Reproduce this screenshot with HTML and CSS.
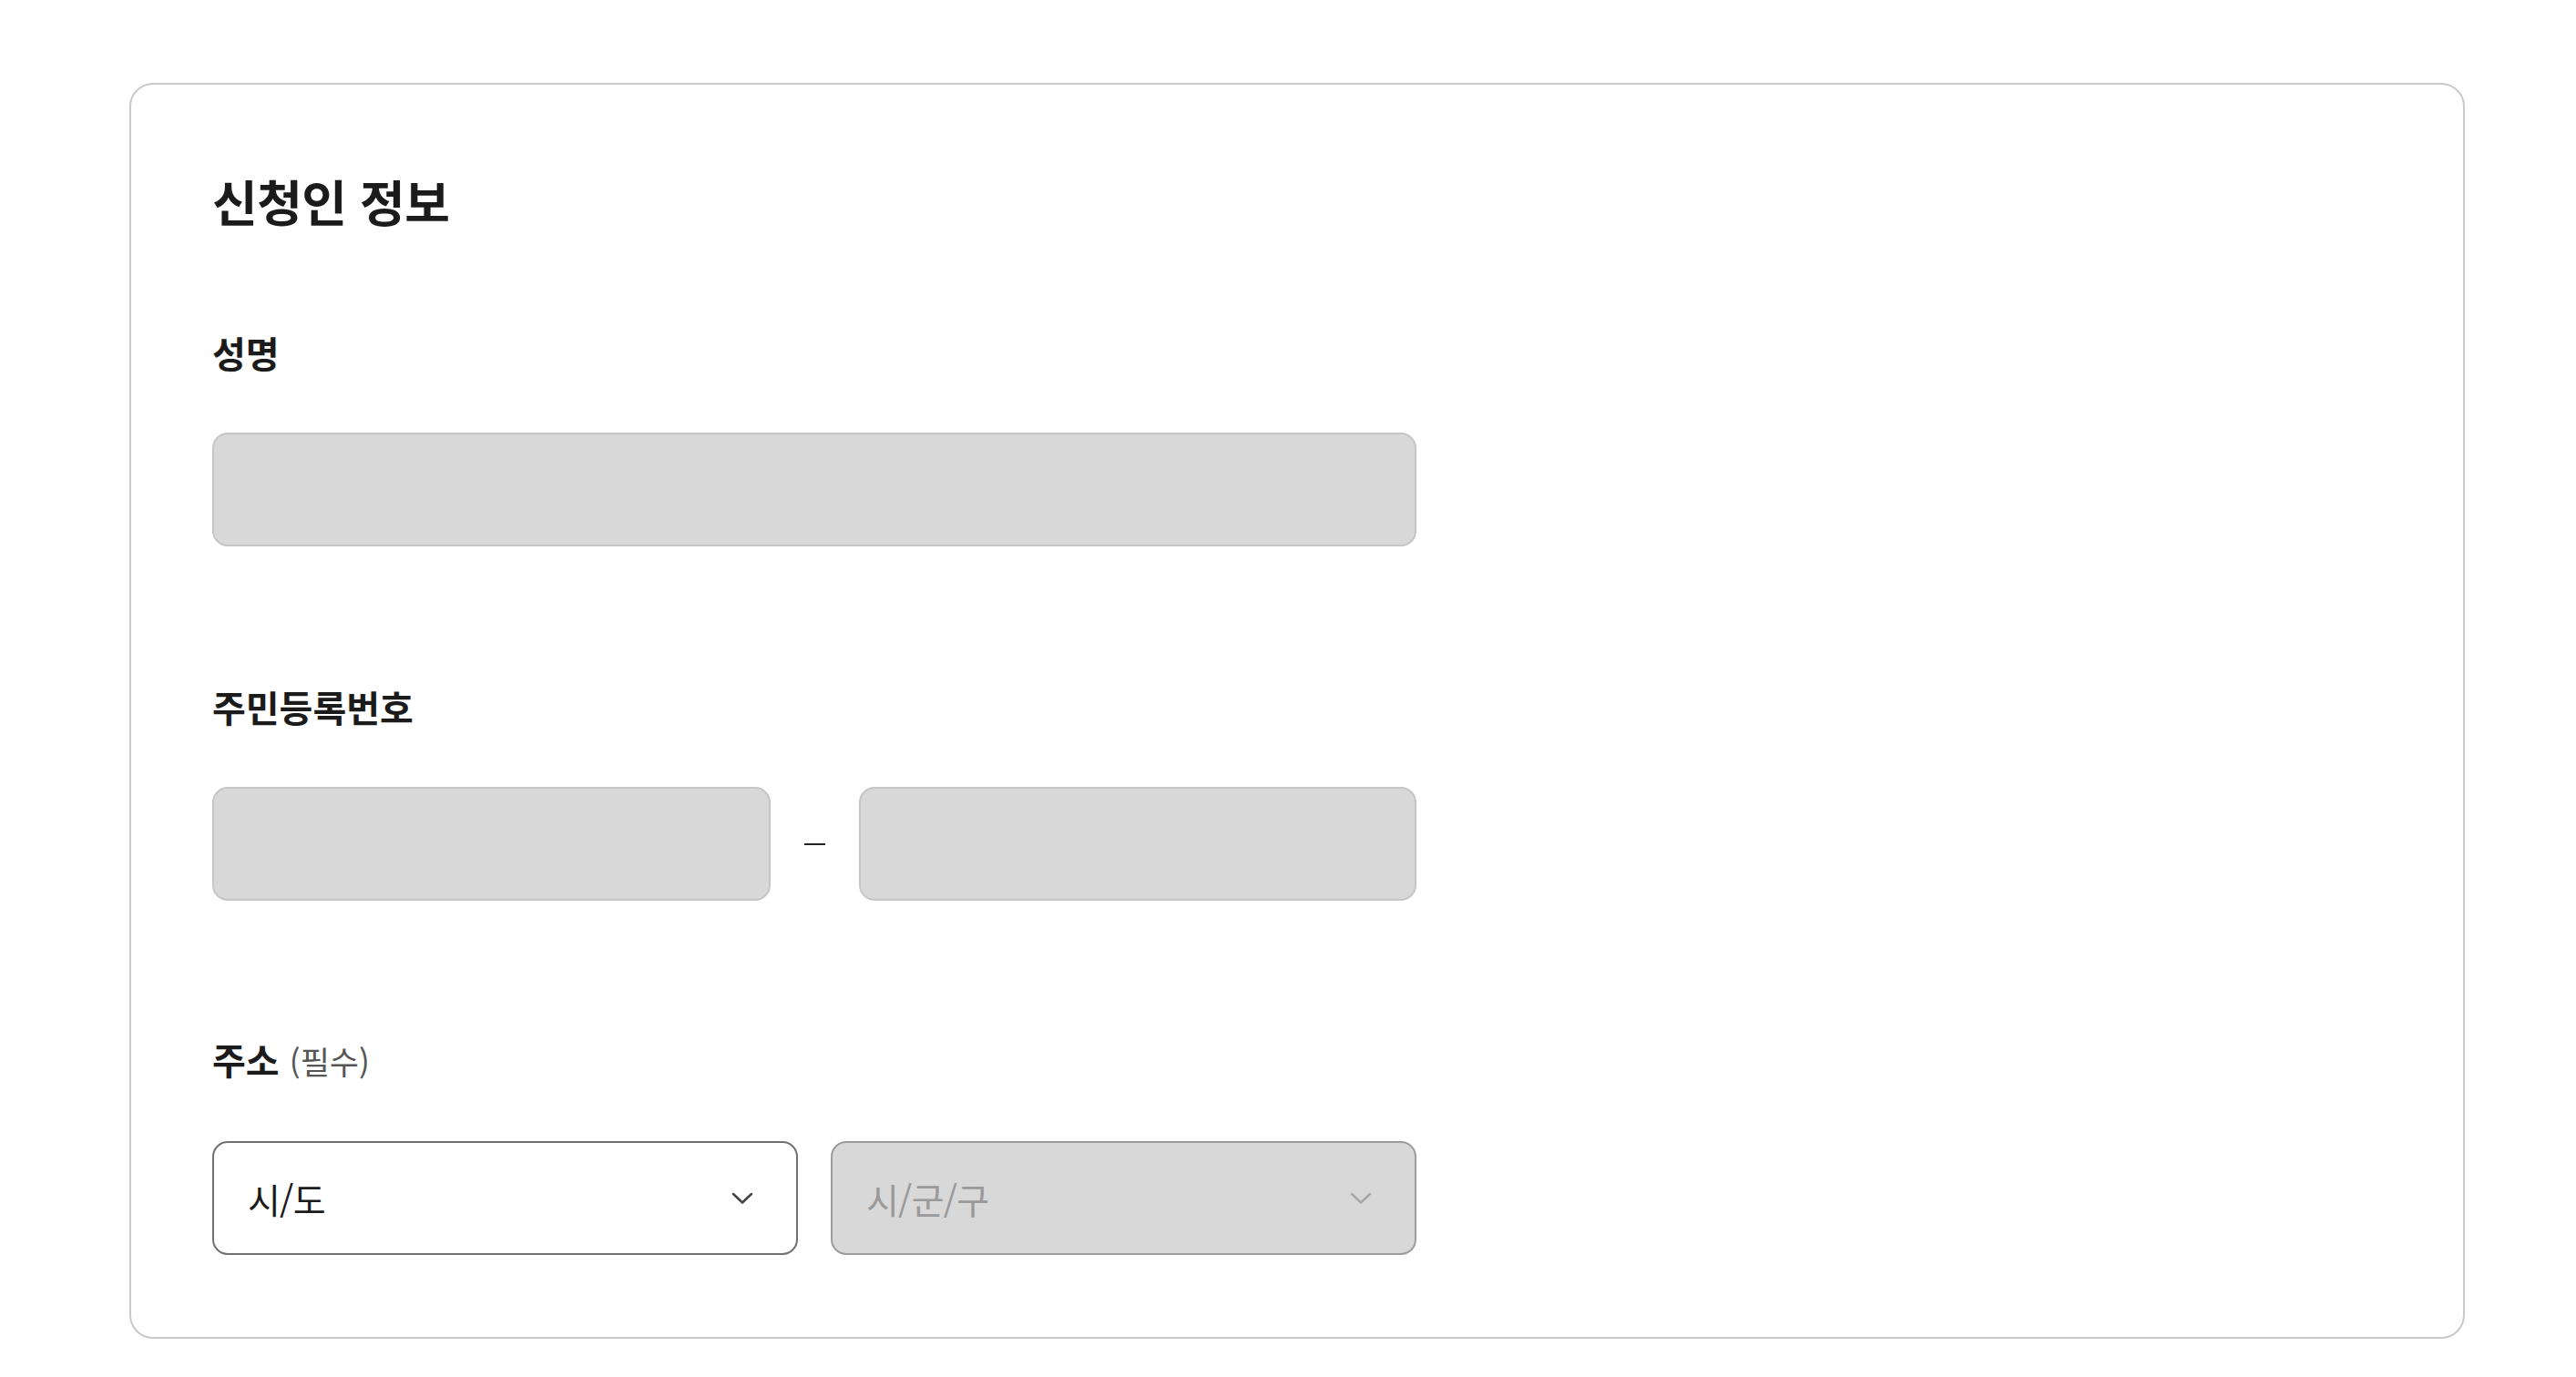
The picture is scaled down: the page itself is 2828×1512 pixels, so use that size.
FILE: index.html
```html
<!DOCTYPE html>
<html lang="ko">
<head>
<meta charset="utf-8">
<title>신청인 정보</title>
<link rel="stylesheet" href="styles.css">
</head>
<body>
<section class="card">
  <h2 class="card-title">신청인 정보</h2>
  <div class="fields">
    <div class="field">
      <label class="field-label" for="name">성명</label>
      <input class="text-input" id="name" type="text">
    </div>
    <div class="field">
      <label class="field-label" for="rrn1">주민등록번호</label>
      <div class="rrn-row">
        <input class="text-input" id="rrn1" type="text">
        <span class="dash" aria-hidden="true"></span>
        <input class="text-input" id="rrn2" type="text">
      </div>
    </div>
    <div class="field field-address">
      <div class="field-label">주소 <span class="req">(필수)</span></div>
      <div class="addr-row">
        <div class="select">
          <span class="select-text">시/도</span>
          <svg class="chevron" width="24" height="14" viewBox="0 0 24 14"><polyline points="2,2 12,11.5 22,2" fill="none" stroke="currentColor" stroke-width="2.5" stroke-linecap="round" stroke-linejoin="round"/></svg>
        </div>
        <div class="select select-disabled">
          <span class="select-text">시/군/구</span>
          <svg class="chevron" width="24" height="14" viewBox="0 0 24 14"><polyline points="2,2 12,11.5 22,2" fill="none" stroke="currentColor" stroke-width="2.5" stroke-linecap="round" stroke-linejoin="round"/></svg>
        </div>
      </div>
    </div>
  </div>
</section>
</body>
</html>
```
FILE: styles.css
```css
* { box-sizing: border-box; }
html, body {
  margin: 0;
  padding: 0;
  background: #ffffff;
}
body {
  font-family: "Noto Sans CJK KR", "Noto Sans", sans-serif;
  color: #1b1b1b;
  padding: 91px 122px 0 142px;
}
.card {
  border: 2px solid #c9c9c9;
  border-radius: 26px;
  padding: 90px 89px 90px 89px;
}
.card-title {
  margin: 0 0 100px 0;
  font-size: 54px;
  line-height: 76px;
  font-weight: 700;
  letter-spacing: -0.01em;
  color: #1b1b1b;
}
.fields {
  width: 1322px;
  display: flex;
  flex-direction: column;
  gap: 148px;
}
.field {
  display: flex;
  flex-direction: column;
}
.field-address {
  margin-top: -2px;
}
.field-label {
  display: block;
  margin-bottom: 60px;
  font-size: 40px;
  line-height: 56px;
  font-weight: 700;
  letter-spacing: 0;
  color: #1b1b1b;
}
.req {
  font-size: 35px;
  font-weight: 400;
  letter-spacing: 0;
  color: #555555;
}
.text-input {
  display: block;
  width: 100%;
  height: 125px;
  margin: 0;
  padding: 0 40px;
  background: #d8d8d8;
  border: 2px solid #c6c6c6;
  border-radius: 17px;
  font-family: inherit;
  font-size: 38px;
  outline: none;
}
.rrn-row {
  display: grid;
  grid-template-columns: 1fr 97px 1fr;
  align-items: center;
}
.dash {
  display: flex;
  justify-content: center;
  align-items: center;
}
.dash::before {
  content: "";
  display: block;
  width: 23px;
  height: 2px;
  background: #222222;
}
.addr-row {
  display: grid;
  grid-template-columns: 1fr 1fr;
  gap: 36px;
}
.select {
  height: 125px;
  display: flex;
  align-items: center;
  justify-content: space-between;
  padding: 0 47px 0 37px;
  background: #ffffff;
  border: 2px solid #707070;
  border-radius: 17px;
  color: #444444;
}
.select-text {
  font-size: 39px;
  line-height: 56px;
  letter-spacing: -0.02em;
  color: #1b1b1b;
}
.select-disabled {
  background: #d8d8d8;
  border-color: #9c9c9c;
  color: #a8a8a8;
}
.select-disabled .select-text {
  color: #9a9a9a;
}
.chevron {
  display: block;
}
```
